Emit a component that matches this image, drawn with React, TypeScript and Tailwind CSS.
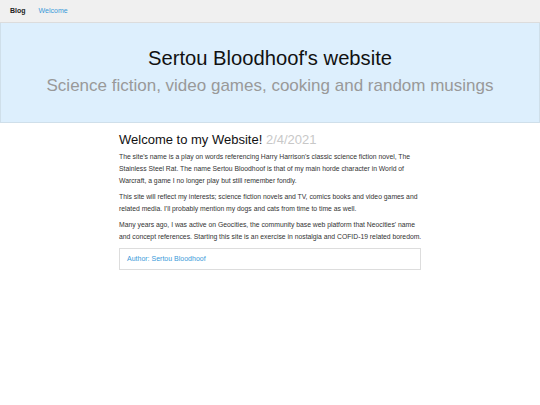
const App = () => {
  return (
    <div className="min-h-screen bg-white font-['Liberation_Sans',Arial,sans-serif] text-[#222]">
      <nav className="flex h-[23px] items-center gap-[13px] border-b border-[#dcdcdc] bg-[#f0f0f0] px-[10px] text-[7px]">
        <span className="font-bold text-[#222]">Blog</span>
        <span className="text-[#3a9ad9]">Welcome</span>
      </nav>

      <header className="flex h-[100px] flex-col items-center border-b border-[#cfdfea] border-x bg-[#ddeffd] pt-[23px]">
        <h1 className="text-[20.2px] leading-[24px] text-[#111]">Sertou Bloodhoof's website</h1>
        <p className="mt-[6px] text-[17px] leading-[20px] text-[#999]">
          Science fiction, video games, cooking and random musings
        </p>
      </header>

      <main className="mx-auto w-[302px] pt-[9px]">
        <h2 className="text-[13px] leading-[16px] text-[#111]">
          Welcome to my Website! <span className="text-[13px] text-[#c8c8c8]">2/4/2021</span>
        </h2>
        <div className="mt-[3px] space-y-[4px] whitespace-nowrap text-[6.8px] leading-[12px] text-[#333]">
          <p>
            The site's name is a play on words referencing Harry Harrison's classic science fiction novel, The
            <br />
            Stainless Steel Rat. The name Sertou Bloodhoof is that of my main horde character in World of
            <br />
            Warcraft, a game I no longer play but still remember fondly.
          </p>
          <p>
            This site will reflect my interests; science fiction novels and TV, comics books and video games and
            <br />
            related media. I'll probably mention my dogs and cats from time to time as well.
          </p>
          <p>
            Many years ago, I was active on Geocities, the community base web platform that Neocities' name
            <br />
            and concept references. Starting this site is an exercise in nostalgia and COFID-19 related boredom.
          </p>
        </div>
        <div className="mt-[5px] flex h-[22px] items-center border border-[#dddddd] px-[7px] text-[7px] text-[#3a9ad9]">
          Author: Sertou Bloodhoof
        </div>
      </main>
    </div>
  );
};

export default App;
